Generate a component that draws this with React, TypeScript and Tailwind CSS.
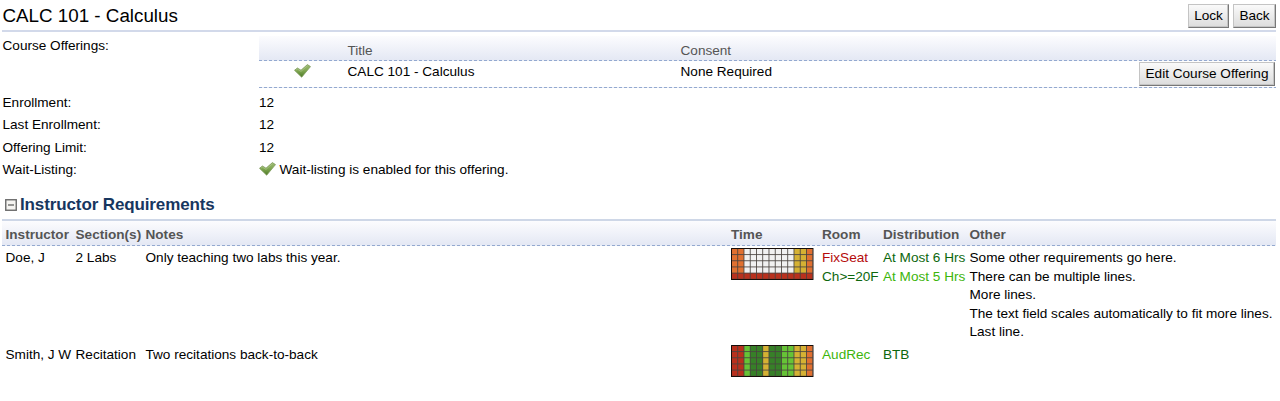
import type { ReactNode } from 'react';

const R = '#b9301d', O = '#e07030', Y = '#d5b133', W = '#f1f1f1', G = '#66c336', D = '#378028';

const labRows: string[][] = [0, 1, 2, 3, 4].map((row) =>
  row === 4 ? Array<string>(13).fill(R) : [O, O, W, W, W, W, W, W, W, W, Y, Y, O],
);
const recitationRows: string[][] = Array.from({ length: 5 }, () => [R, R, G, D, D, Y, D, D, G, G, Y, Y, O]);

function TimeGrid({ rows }: { rows: string[][] }) {
  return (
    <svg width="83" height="32" viewBox="0 0 83 32" className="block">
      <rect width="82.6" height="32" fill="#4a4440" />
      {rows.map((row, y) =>
        row.map((fill, x) => (
          <rect key={`${x}-${y}`} x={0.9 + x * 6.25} y={0.9 + y * 6.15} width="5.4" height="5.3" fill={fill} />
        )),
      )}
      <path d="M.5 32V.5H82M0 31.5H82" fill="none" stroke="#160d0a" />
    </svg>
  );
}

function Check() {
  return (
    <svg width="17" height="14" viewBox="0 0 17 14" className="block">
      <defs>
        <linearGradient id="leaf" x1="0" y1="0" x2="0" y2="1">
          <stop offset="0" stopColor="#9dbb74" />
          <stop offset=".5" stopColor="#7fa650" />
          <stop offset="1" stopColor="#4c7a26" />
        </linearGradient>
      </defs>
      <path d="M.5 6.3 3.4 4 7 6.2 13.4.6 16.5 2.6 7.7 13.2Z" fill="url(#leaf)" stroke="#7d9b5c" strokeWidth=".8" strokeLinejoin="round" />
      <path d="M2 6.1 3.4 5.1 7 7.4 13.5 1.7" fill="none" stroke="#b3cb92" strokeWidth=".6" />
    </svg>
  );
}

function Button({ children, className }: { children: ReactNode; className: string }) {
  return (
    <button
      className={`flex h-6 items-center justify-center border border-t-[#c4c4c4] border-l-[#c4c4c4] border-r-[#777] border-b-[#777] bg-linear-to-b from-[#fafafa] to-[#dcdcdc] shadow-[inset_-1px_-1px_0_#c4c4c4] whitespace-nowrap ${className}`}
    >
      {children}
    </button>
  );
}

function Field({ label, children }: { label: string; children: ReactNode }) {
  return (
    <div className="flex h-[22.6px] items-center">
      <div className="w-[257px] pl-[0.5px]">{label}</div>
      <div className="flex items-center">{children}</div>
    </div>
  );
}

const offeringCols = 'grid grid-cols-[88.5px_333px_240px_1fr]';
const requirementCols = 'grid grid-cols-[70px_70px_585.5px_91px_61px_86.5px_1fr] pl-[3.5px] whitespace-nowrap';
const dash = 'h-px shrink-0 bg-[repeating-linear-gradient(90deg,#94a9d0_0_3px,#e8edf6_3px_5px)]';
const header = 'bg-linear-to-b from-[#fcfcfe] to-[#e4e8f4] text-[#555]';

export default function App() {
  return (
    <main className="h-[401px] w-[1280px] overflow-hidden bg-white pr-1 pl-[2px] font-['Liberation_Sans',Arial,sans-serif] text-[13.6px] leading-[18.6px] text-black">
      <header className="flex h-[32px] justify-between border-b-2 border-[#d2d9ea]">
        <h1 className="mt-[6px] pl-[0.5px] text-[18.8px] leading-5">CALC 101 - Calculus</h1>
        <div className="mt-1 flex gap-1">
          <Button className="w-[41px]">Lock</Button>
          <Button className="w-[43px]">Back</Button>
        </div>
      </header>

      <section className="flex h-[59px] pt-1">
        <div className="w-[257px] shrink-0 pt-px pl-[0.5px]">Course Offerings:</div>
        <div className="grow">
          <div className={`${offeringCols} ${header} h-6 pt-[6px]`}>
            <span />
            <span>Title</span>
            <span>Consent</span>
          </div>
          <div className={dash} />
          <div className={`${offeringCols} h-[26px]`}>
            <div className="flex justify-center pt-[3px] pr-[2px]"><Check /></div>
            <div className="pt-[2px]">CALC 101 - Calculus</div>
            <div className="pt-[2px]">None Required</div>
            <div className="flex justify-end pt-px pr-px">
              <Button className="w-[136px]">Edit Course Offering</Button>
            </div>
          </div>
          <div className={dash} />
        </div>
      </section>

      <section className="pt-[0.6px]">
        <Field label="Enrollment:">12</Field>
        <Field label="Last Enrollment:">12</Field>
        <Field label="Offering Limit:">12</Field>
        <Field label="Wait-Listing:">
          <div className="mb-[4px]"><Check /></div>
          <span className="ml-[3.5px]">Wait-listing is enabled for this offering.</span>
        </Field>
      </section>

      <div className="flex h-[39px] items-start border-b-2 border-[#ced7e7] pt-[13px]">
        <svg width="12" height="12" viewBox="0 0 12 12" className="mt-[4px] ml-[3px] shrink-0">
          <rect x=".75" y=".75" width="10.5" height="10.5" fill="#f5f4f1" stroke="#6b6b6b" strokeWidth="1.4" />
          <path d="M3 6H9" stroke="#555" strokeWidth="1.2" />
        </svg>
        <h2 className="ml-[3px] text-[17px] leading-5 font-bold tracking-[-0.12px] text-[#17365f]">Instructor Requirements</h2>
      </div>

      <section>
        <div className={`${requirementCols} ${header} h-6 pt-[5px] font-bold`}>
          <span>Instructor</span>
          <span>Section(s)</span>
          <span>Notes</span>
          <span>Time</span>
          <span>Room</span>
          <span>Distribution</span>
          <span>Other</span>
        </div>
        <div className={dash} />
        <div className={`${requirementCols} h-[97px] pt-[3px]`}>
          <div>Doe, J</div>
          <div>2 Labs</div>
          <div>Only teaching two labs this year.</div>
          <div className="-mt-px"><TimeGrid rows={labRows} /></div>
          <div>
            <div className="text-[#b50b0b]">FixSeat</div>
            <div className="text-[#0d670d]">Ch&gt;=20F</div>
          </div>
          <div>
            <div className="text-[#0d670d]">At Most 6 Hrs</div>
            <div className="text-[#3db50b]">At Most 5 Hrs</div>
          </div>
          <div>
            <div>Some other requirements go here.</div>
            <div>There can be multiple lines.</div>
            <div>More lines.</div>
            <div>The text field scales automatically to fit more lines.</div>
            <div>Last line.</div>
          </div>
        </div>
        <div className={`${requirementCols} pt-[3px]`}>
          <div>Smith, J W</div>
          <div>Recitation</div>
          <div>Two recitations back-to-back</div>
          <div className="-mt-px"><TimeGrid rows={recitationRows} /></div>
          <div className="text-[#3db50b]">AudRec</div>
          <div className="text-[#0d670d]">BTB</div>
        </div>
      </section>
    </main>
  );
}
